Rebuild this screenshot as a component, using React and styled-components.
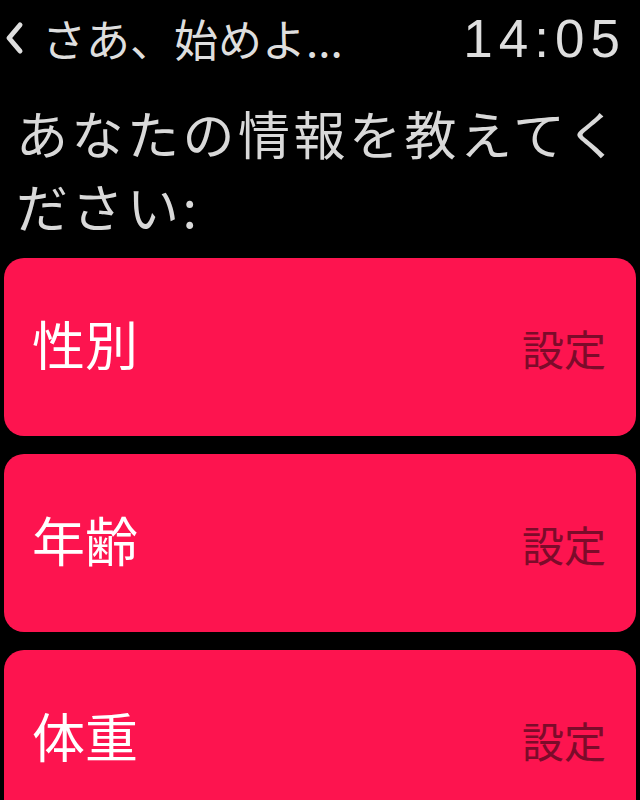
import React from "react";
import styled, { createGlobalStyle } from "styled-components";

const GlobalStyle = createGlobalStyle`
  html, body {
    margin: 0;
    padding: 0;
    background: #000;
  }
  body {
    font-family: "Noto Sans CJK JP", "Noto Sans", sans-serif;
  }
`;

const Screen = styled.div`
  width: 640px;
  height: 800px;
  overflow: hidden;
  background: #000;
  display: flex;
  flex-direction: column;
`;

const TopBar = styled.header`
  height: 64px;
  display: flex;
  align-items: center;
  justify-content: space-between;
  padding: 6px 20px 0 4px;
  color: #dedede;
`;

const BackLink = styled.div`
  display: flex;
  align-items: center;
  gap: 18px;
  font-size: 44px;
  letter-spacing: 0;
`;

const Clock = styled.div`
  font-family: "Liberation Sans", "Noto Sans", sans-serif;
  font-size: 53px;
  letter-spacing: 6px;
  margin-right: -6px;
`;

const Prompt = styled.h1`
  margin: 0;
  padding: 26px 0 0 16px;
  font-weight: 400;
  font-size: 52px;
  line-height: 73px;
  letter-spacing: 3.5px;
  color: #d9d9d9;
`;

const List = styled.div`
  display: flex;
  flex-direction: column;
  gap: 18px;
  padding: 16px 4px 0;
`;

const Row = styled.div`
  flex: 0 0 178px;
  border-radius: 20px;
  background: #fd144f;
  display: flex;
  align-items: center;
  justify-content: space-between;
  padding: 0 30px 0 28px;
`;

const Label = styled.span`
  font-size: 53px;
  color: #fff;
  margin-top: -8px;
`;

const Action = styled.span`
  font-size: 42px;
  color: #7c0b2a;
`;

const Chevron = () => (
  <svg width="20" height="34" viewBox="0 0 20 34">
    <path
      d="M16 4 L5 17 L16 30"
      fill="none"
      stroke="#dedede"
      strokeWidth="5"
      strokeLinecap="round"
      strokeLinejoin="round"
    />
  </svg>
);

const rows = ["性別", "年齢", "体重"];

export default function App() {
  return (
    <Screen>
      <GlobalStyle />
      <TopBar>
        <BackLink>
          <Chevron />
          <span>さあ、始めよ...</span>
        </BackLink>
        <Clock>14:05</Clock>
      </TopBar>
      <Prompt>
        あなたの情報を教えてく
        <br />
        ださい:
      </Prompt>
      <List>
        {rows.map((r) => (
          <Row key={r}>
            <Label>{r}</Label>
            <Action>設定</Action>
          </Row>
        ))}
      </List>
    </Screen>
  );
}
